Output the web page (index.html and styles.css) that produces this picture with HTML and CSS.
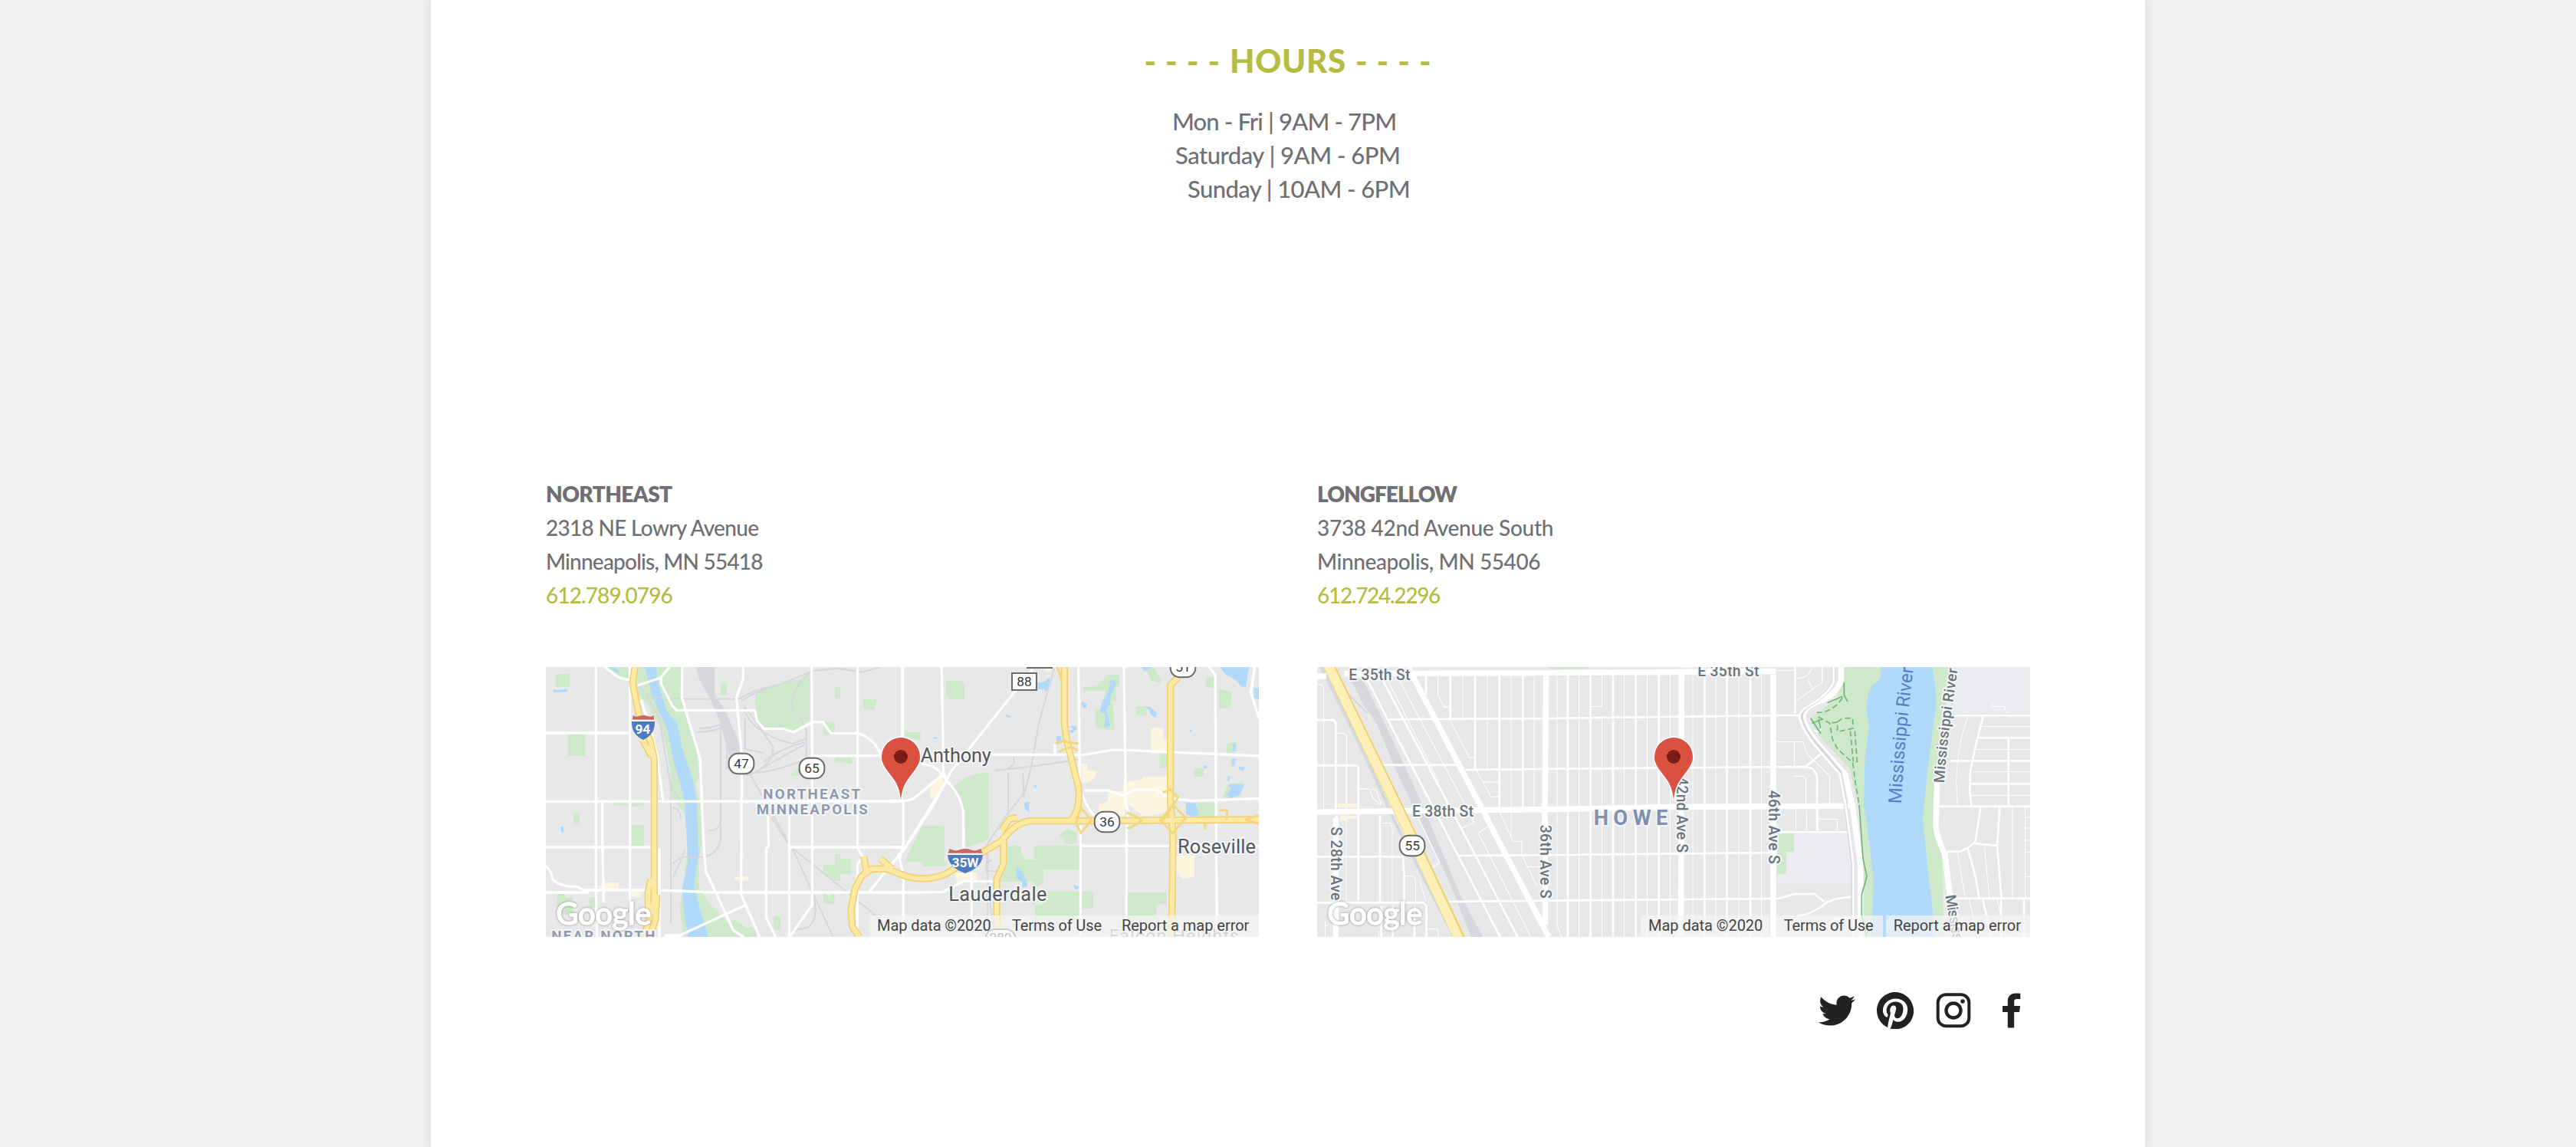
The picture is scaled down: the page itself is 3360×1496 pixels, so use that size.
FILE: index.html
```html
<!DOCTYPE html>
<html lang="en">
<head>
<meta charset="utf-8">
<title>Hours and locations</title>
<link rel="stylesheet" href="styles.css">
</head>
<body>
<main class="page">
  <section class="hours">
    <h2 class="hours-title"><span class="dashes">- - - -</span><span class="word">HOURS</span><span class="dashes">- - - -</span></h2>
    <p class="hours-line weekdays">Mon - Fri | 9AM - 7PM</p>
    <p class="hours-line saturday">Saturday | 9AM - 6PM</p>
    <p class="hours-line sunday">Sunday | 10AM - 6PM</p>
  </section>

  <section class="locations">
    <article class="location">
      <address class="address">
        <strong class="ne-name">NORTHEAST</strong>
        <span class="ne-street">2318 NE Lowry Avenue</span>
        <span class="ne-city">Minneapolis, MN 55418</span>
        <a class="ne-phone">612.789.0796</a>
      </address>
      <svg class="map" viewBox="36 30 2790 1056">
        <defs>
          <g id="pin">
            <path d="M0 171C-4 110-30 85-56 50C-70 30-75 18-75 0A75 75 0 0 1 75 0C75 18 70 30 56 50C30 85 4 110 0 171Z" fill="#db5140" stroke="#fff" stroke-width="10" paint-order="stroke"/>
            <circle r="27" fill="#7a1c18"/>
          </g>
        </defs>
        <rect class="land" x="36" y="30" width="2790" height="1056"/>
        <g class="park">
          <path d="M75 57h54v51h-54zM123 293h66v85h-66zM145 601h23v44h-23zM372 648h48v84h-48zM721 93h22v49h-22zM1167 109h21v45h-21zM1278 156h53l-10 41h-43zM1167 384h66v24l-66-6zM1122 245h44v53h-44zM987 455l40-32v32zM80 918l30 0v15h32v64h-62zM207 930h21v42h-21zM1121 918h15l6 14 10-14h13v41l-44-4zM927 1005h27v58l-27-8zM1122 803h45v-41h21v18h41v59h-41v28h-21l-45-24zM302 563h118v8l-45 4-73-6z"/>
          <path d="M275 30h125v60h-40zM400 30h178l-12 100 10 70 30 75 20 60 10 130-15 25 15 60 14 100v60l-15 60 0 120 40 65 70 70 60 110 150 50H640l-60-60-20-150 30-220-10-150-50-60-8-120-30-150-60-100-70-80z"/>
          <path d="M855 125l85-20 30-22 50-2 50-30V240l-75 45-80-12h-30l-30-35zM760 1016l20 5 40 28 40 0v37H750z"/>
        </g>
        <g class="water">
          <path d="M422 30H468L472 80 508 200 550 250 570 350 610 470 628 560 633 770 615 880 640 980 673 1086H593L573 970 570 900 592 790 580 560 565 500 536 400 512 275 455 150z"/>
          <path d="M64 118l20 2 30-4 9 6-8 6-48 2zM93 653l12 2v22l-8 2zM278 30l30 2 20 20-22-4zM933 197l12 8-6 3zM946 243l14 17-6 2z"/>
        </g>
        <g class="rail">
          <path d="M628 30H694V140L735 200L805 365V430L850 445L825 455L755 370L715 230L680 150L640 80Z" fill="#d6d7dc"/>
          <path d="M400 105Q440 155 540 155H790L860 120 960 95 1080 45 1180 35 1270 50 1340 32M430 140L480 230 505 380 525 500V1035M525 510q30 10 35 50M530 580q30 0 34 45M720 235V700Q710 770 640 773H570L530 800M720 630Q715 670 675 670M715 270Q680 285 620 285M718 255Q690 270 635 270M810 180Q900 300 925 345Q930 400 850 445M810 190Q840 290 1000 330L1055 310M800 165Q860 120 940 105M1070 50Q980 130 1005 210Q1060 250 1055 290V390Q960 430 860 445M1055 330Q960 380 850 445M830 440L1010 760 1160 1086M920 620L990 730 1300 980 1370 1040M1085 930Q1105 1020 1060 1050L1000 1060M580 740L570 773 535 850M745 430V280M890 400Q970 340 1050 325M815 230V350L885 366"/>
        </g>
        <g class="shop"><path d="M240 890l25-17h56v25l-60 14zM372 908h38l-2 24-36-4zM775 853l25-5h28v18h-52z"/></g>
        <g class="road">
          <path d="M232 30V900L236 1086M365 30V1040M257 560V700L262 950M1076 30L1078 380M1078 460V960L990 1086M1256 30V740L1278 775 1255 800V1086M808 30V75L782 150 803 380 800 920 872 1086M570 30L568 150 640 390 652 700 662 830 700 910 770 1060 810 1086M36 288H370M36 556L1430 555M36 735H450M990 735H1440M36 912H205M190 903L480 903 700 912H1440M36 808Q60 830 62 860Q90 890 160 890L195 908M265 30L320 70 365 82M395 102L485 72 520 30M487 72V95L530 180 548 200H855L862 240 890 272H965L1005 285 1080 245H1120L1152 290H1260Q1320 310 1345 370M1085 377H1345M408 160L440 250 470 370 495 556M480 740V1086M500 1080H560L815 962M905 610L908 730 898 740V1010L935 1086M988 560V1086M1430 750L1300 910M1430 30V300"/>
        </g>
        <g transform="translate(1380 0)">
          <g class="park">
            <path d="M222 84h62l10 12v60h-56l-16-14zM60 285h62v32l-35-7-27 6zM758 108l52-2 46-45h43v43h-16l5 58h-14l8 110-5 7-70-13V197h20l20-75-90 0zM966 183h40v35h-40zM1240 68h34v43h-34zM1290 115l48 12v45l-8 19h-40zM1005 32l30 2 27 40 0 18-40-10zM1058 370h31v55h-31zM1191 425h39v34h-39zM1320 330l38-10 0 40-38 10zM1305 540l20-52 60-4-10 50-35 10zM1205 560h77v56h-77zM60 790L130 650H215V790L230 800 215 810H130V792zM250 500Q300 445 388 443V705L300 738 292 600zM665 690l32-30 37 20v38l-40 5zM450 730H515V760L530 783H568V730H743V822H603V870L560 908V960H600V908H798V975H750V1020H570V870H430zM930 912H1084V958H1045V1020H930z"/>
          </g>
          <g class="water">
            <path d="M580 90l25-2 22-16 3 25-15 33-12-14-23 0zM865 80l18 0 4 18-20 40-4 40-14 20 15 58-10 12-12-6 3-48-22-10 10-40 25-40zM753 165l20 8-2 18-15-2zM998 185l20 0 30 25-5 17-20-10-5-20zM1295 30H1408L1395 108H1378L1360 85 1310 55zM1427 112h19v45l-19-5zM985 30h45l-30 18zM1160 560l40 2 10 50-25 4-23-10zM1322 490l68 0-20 40-30 13-22-10 20-30zM702 265q30-15 33 6l-20 18-12-6 18-12zM655 300h18v20h-20zM458 214l16 8-8 8-10-8zM175 303l18 4-18 6zM525 562l22-4 0 40-15-10zM495 815l20 3 12 38 12 16v20h-20v-22l-22-15zM563 490l16 6-8 8zM1343 330l14 3-5 28-8-2zM1340 388h16l-6 28h-10zM1368 420l22 2-4 14-18-4zM1228 412l20 8-16 8zM722 880l22 10-8 12-14-8zM1172 274l14 4-8 8zM1325 455l8 2-4 20h-5z"/>
          </g>
          <g class="shop"><path d="M1025 270l46-3 4 50 14 2v48h-66zM160 490l50-35 0 40-28 52-22-4zM750 408l25 0 0 25 35 6-6 25-30 20-20-2zM820 570l35-15v-40h60v-35l75-10 0-10h99v60l20 30-25 50-60 12H990l-60-50-10 50h-100zM1122 768l72-2v85l-46 10-26-35zM255 835h90l0 30-80 10zM600 30h40l-20 22z"/></g>
          <g class="rail"><path d="M645 35L585 250 555 420 530 520 450 620 385 720V1010M412 435L550 420 700 398 740 390M465 445V610M523 445L527 540M487 380V410L465 428M380 760V840M380 828H425M400 785L380 800M390 930L410 1060"/></g>
          <g class="road">
            <path d="M53 30V310M55 560V720L40 780 55 840V1086M205 30L212 440 225 475 60 740 0 815M560 40L240 440Q210 500 160 590L60 740M0 555H60L95 545 210 450M130 412Q180 405 225 475Q280 530 290 600L290 740M400 373H660L760 374 870 355H930L1446 378M740 30L745 500Q765 570 800 610M918 30L925 560 935 600 928 680V1086M764 513H855L915 532 960 510H1045L1100 545 1190 553 1446 545M750 730H1446M748 650V1086M1250 30L1275 60 1282 1086M1430 30L1415 130 1446 230M0 735H50M0 914L210 910 290 868H410M322 835V1060L350 1086M648 330V370"/>
          </g>
        </g>
        <g class="hwy-case"><use href="#hwy-ne"/></g>
        <g class="hwy-fill"><g id="hwy-ne">
          <path d="M385 30L375 90 400 215 445 320 460 390V940L435 1040 415 1086M415 315L450 380M448 860L436 910V1000M470 920L465 1020 440 1086"/>
          <path d="M1262 1086L1235 1045 1230 980 1245 900 1270 850 1310 820H1370L1450 850Q1530 870 1600 840L1820 710Q1870 640 1930 632H2150L2826 627"/>
          <path d="M2065 30V250L2075 320 2120 500Q2130 590 2090 630M2510 70L2480 100V560L2490 690 2485 1086M1827 690V800L1800 860V1000L1806 1050M1280 770L1290 830M1345 780L1390 820M1820 670L1850 625 1880 620"/>
        </g></g>
        <g class="ramp"><path d="M2030 330l30-10 60 10M2045 360q60-30 70 0M2110 640l20-60 40 50-40 50zM2310 600q30 10 60 30-40 30-60 30M2450 520l30-10 30 30-20 30-40 60M2540 620l-50-50-50 60 50 50zM2670 590h30v40M2615 640v25M2826 610l-50 17 50 17M2036 30l20 50"/></g>
        <g class="label area">
          <text x="886" y="547" textLength="380">NORTHEAST</text>
          <text x="860" y="605" textLength="435">MINNEAPOLIS</text>
          <text x="58" y="1102" textLength="405">NEAR NORTH</text>
        </g>
        <g class="label town">
          <text x="1502" y="402" textLength="276">Anthony</text>
          <text x="1612" y="944" textLength="384">Lauderdale</text>
          <text x="2508" y="759" textLength="306">Roseville</text>
          <text x="2240" y="1108" textLength="508" class="faded">Falcon Heights</text>
        </g>
        <g class="badge">
          <rect x="752" y="368" width="98" height="80" rx="36"/><text x="801" y="427">47</text>
          <rect x="1028" y="386" width="98" height="80" rx="36"/><text x="1077" y="445">65</text>
          <rect x="2183" y="596" width="98" height="80" rx="36"/><text x="2232" y="655">36</text>
          <rect x="2480" y="-10" width="98" height="80" rx="36"/><text x="2529" y="49">51</text>
          <rect x="1860" y="54" width="96" height="66"/><text x="1908" y="105">88</text>
          <rect x="1757" y="1056" width="116" height="80" rx="36"/><text x="1815" y="1106">280</text>
          <path d="M1917 33H2019"/>
        </g>
        <g class="shield">
          <path class="red" d="M377 219q10 8 20 4 11-4 20-4 9 0 20 4 10 4 20-4l4 24h-88z"/>
          <path class="white" d="M373 236h88v8h-88z"/>
          <path class="blue" d="M372 243h90q2 50-45 72q-47-22-45-72z"/>
          <text x="415" y="291">94</text>
          <path class="red" d="M1616 741q20 10 33 6 15-6 28-6 14 0 28 6 15 4 33-6l8 22h-138z"/>
          <path class="white" d="M1609 758h136v8h-136z"/>
          <path class="blue" d="M1608 765h138q-4 50-69 72q-65-22-69-72z"/>
          <text x="1677" y="813">35W</text>
        </g>
        <use href="#pin" x="1425" y="381"/>
        <text class="logo" x="76" y="1038" textLength="372">Google</text>
        <rect class="credit-bg" x="1302" y="1002" width="1524" height="84"/>
        <g class="credit">
          <text x="1332" y="1062" textLength="446">Map data ©2020</text>
          <text x="1860" y="1062" textLength="351">Terms of Use</text>
          <text x="2289" y="1062" textLength="499">Report a map error</text>
        </g>
      </svg>
    </article>

    <article class="location">
      <address class="address">
        <strong class="lf-name">LONGFELLOW</strong>
        <span class="lf-street">3738 42nd Avenue South</span>
        <span class="lf-city">Minneapolis, MN 55406</span>
        <a class="lf-phone">612.724.2296</a>
      </address>
      <svg class="map" viewBox="24 30 2790 1056">
        <rect class="land" x="24" y="30" width="2790" height="1056"/>
        <g class="campus"><path d="M2530 30H2814V210H2520zM1828 678H2110L2118 880H1824z"/></g>
        <g class="park">
          <path d="M932 30h156v7h-156zM1828 678h61v75h-30v86h-35zM2086 30H2500L2450 500 2440 650 2470 780 2475 1086H2155L2165 870 2150 620 2110 430 1980 290 1955 230 2060 150z"/>
        </g>
        <g class="water"><path d="M2230 30H2432L2448 160 2412 440 2394 620 2415 840 2445 1086H2194L2200 850 2175 640 2163 570 2168 380 2184 260 2172 190 2184 120 2230 68z"/></g>
        <g class="rail">
          <path d="M160 80L200 80 290 260 420 540 580 920 670 1086H630L540 860 400 570 330 420 260 250 210 180z" fill="#d6d7dc"/>
          <path stroke-width="12" d="M40 30L130 210 250 460 330 640 560 1086"/>
          <path d="M120 110L220 210"/>
        </g>
        <g class="blocks-case"><use href="#wide" stroke-width="15"/><use href="#thin" stroke-width="9"/><use href="#main" stroke-width="29"/></g>
        <g class="blocks-case"><use href="#wide"/><use href="#thin"/></g>
        <g class="blocks-fill">
          <g id="thin">
            <path d="M594 60V235M690 60V430M783 60V590M873 60V590M963 60V580M1049 60V1086M1138 60V185H1098M1138 230V1086M1225 60V1086M1316 60V1086M1406 60V1086M1494 60V1086M1584 60V1086M1674 60V1086M1763 60V1086M963 590V1040L980 1086M783 590V700M497 66V140L520 186H540M545 240L620 385H640M645 430L705 538H735M672 480H735M735 590L790 712H825V765M825 765L885 890M845 812H900M345 80L640 640 590 660M690 655L655 680 860 1086M300 80L500 480M24 98H40L50 110V590M100 290H130L140 300V590M138 420V590M190 507H230L240 540M280 640H310L318 660V945M365 848H400L410 860V945M425 865L450 945M138 610V770M138 780V945M455 1055H495L500 1086M55 1022V1086M265 1060V1086M500 800L465 818M415 610L505 800M235 510q20-10 30 30l10 30q-20-10-40-40M1450 30h50"/>
            <path d="M1822 322H1925L1940 370 2030 455V570M1892 322V420M1890 457H1930L1936 470V570M1985 625H2060V670M1897 590V670M1940 590V670M1985 590V670M2665 185l50 0 5 25M2665 170v15M1900 74q50 0 60-44M1945 80l20 40M1900 160Q1960 120 2000 90V30M2625 262H2814M2600 352H2814M2590 439H2814M2582 532H2814M2570 225Q2530 330 2525 480L2530 570M2530 755L2560 935M2635 735L2655 935M2745 580V935M2795 580V935M2795 618H2814M2795 660H2814M2795 708H2814M2795 755H2814M2795 850H2814M2575 940L2610 1086M2685 940L2720 1086M1822 43H1890"/>
          </g>
          <g id="wide">
            <path d="M450 60V140M545 60V235M642 60V430M737 60V590M829 60V590M1005 60V1086M1094 60V1086M1182 60V1086M1271 60V1086M1361 60V1086M1540 60V1086M1628 60V1086M1719 60V1086M300 235L916 231 1910 218M275 413H570M605 432L1020 428 1915 420 1960 425Q1985 450 1980 480V670M580 768L1020 765 1810 756M540 948L920 944 1830 936 1890 918H1970L2010 950M1820 676H2105M24 237H90L97 250V590M24 415H180L185 425V945M24 772H360L365 850V945M24 952H440L452 965V1086M270 610V945M220 80L740 1086M280 80L640 760 808 1086M1894 30V210M1935 420L1995 370M1900 1005Q1960 1000 2020 950 2060 930 2115 930M1990 1060L2060 1015 2120 1010M100 610V660M405 965V1086M320 965V1086M275 965V1086"/>
            <path d="M2520 220H2814M2610 307H2814M2500 397H2814M2575 487H2814M2460 575H2814M2490 752H2540Q2590 730 2600 710L2620 580M2590 720L2685 728M2630 225Q2600 330 2580 440L2578 520 2585 575M2729 310V575M2695 580L2685 730 2702 935M2500 935H2814M2570 740L2600 850 2615 935M2628 940L2645 1010 2660 1086M2700 935V1086M2790 935V1086"/>
          </g>
          <g id="main">
            <path d="M24 66H60M24 597L916 587 1410 578 2130 573M130 56L1410 50 1820 46M380 30L930 1086M920 60L915 590 917 1040M1450 60L1448 1086M1809 60L1809 1086M97 620V1086"/>
            <path d="M2075 30V80Q2060 130 2000 160 1930 180 1925 225 1930 270 2000 350L2090 450 2120 580 2150 800V1086M2450 480L2445 650Q2450 700 2480 760L2500 920"/>
          </g>
        </g>
        <path d="M1985 255a14 14 0 1 1-15 20" fill="none" stroke="#fff" stroke-width="6"/>
        <path d="M2045 30V90Q2020 140 1950 180 1915 200 1918 230 1930 280 1980 335L2070 440 2095 590 2120 800V1086" fill="none" stroke="#d4d5da" stroke-width="14"/>
        <path d="M2045 30V90Q2020 140 1950 180 1910 200 1912 230 1925 280 1975 340L2070 450 2095 590 2122 800V1086" fill="none" stroke="#fff" stroke-width="9"/>
        <g class="trail">
          <path d="M2086 90V140L2100 165M2080 145L2020 170M1955 230L1995 290M1960 250L2000 235M2145 570L2160 780 2175 850 2155 920V1000L2175 1086M1995 270L1985 235"/>
          <path stroke-dasharray="22 12" d="M2080 150Q2040 210 1980 208M1985 225L2030 250 2040 310 2060 350 2120 405 2130 480 2145 570M2060 245L2080 230H2120V270L2060 283V245L2030 250M2110 280L2122 400M2128 280L2137 400L2122 405"/>
        </g>
        <path d="M68 20L340 580 590 1110" fill="none" stroke="#f2cf6d" stroke-width="44"/>
        <path d="M66 20L338 580 586 1110" fill="none" stroke="#fdefb5" stroke-width="36"/>
        <path class="shop" d="M105 564h73v15h-73zM114 612h64v12h-42v6h-22z"/>
        <g class="label street">
          <text x="148" y="80" textLength="240">E 35th St</text>
          <text x="1513" y="65" textLength="240">E 35th St</text>
          <text x="396" y="615" textLength="240">E 38th St</text>
          <text transform="translate(79 655) rotate(90)" textLength="288">S 28th Ave</text>
          <text transform="translate(898 647) rotate(90)" textLength="288">36th Ave S</text>
          <text transform="translate(1432 460) rotate(90)" textLength="296">42nd Ave S</text>
          <text transform="translate(1790 512) rotate(90)" textLength="288">46th Ave S</text>
          <path id="parkway" d="M2478 484Q2486 330 2532 30" class="guide"/>
          <text><textPath href="#parkway" textLength="450">Mississippi River</textPath></text>
          <text transform="translate(2482 925) rotate(80)" textLength="390">Mississippi River</text>
        </g>
        <g class="river-name">
          <path id="river" d="M2310 565Q2322 300 2362 0" class="guide"/>
          <text><textPath href="#river" textLength="534">Mississippi River</textPath></text>
        </g>
        <text class="label howe" x="1106" y="647" textLength="290">HOWE</text>
        <g class="badge"><rect x="347" y="689" width="98" height="80" rx="36"/><text x="397" y="748">55</text></g>
        <use href="#pin" x="1419" y="381"/>
        <text class="logo" x="64" y="1038" textLength="372">Google</text>
        <path class="credit-bg" d="M1290 1002H1794V1086H1290zM1822 1002H2238V1086H1822zM2250 1002H2814V1086H2250z"/>
        <g class="credit">
          <text x="1320" y="1062" textLength="448">Map data ©2020</text>
          <text x="1850" y="1062" textLength="351">Terms of Use</text>
          <text x="2279" y="1062" textLength="499">Report a map error</text>
        </g>
      </svg>
    </article>
  </section>

  <nav class="social">
    <svg viewBox="16 16 32 32"><path d="M48,22.1c-1.2,0.5-2.4,0.9-3.8,1c1.4-0.8,2.4-2.1,2.9-3.6c-1.3,0.8-2.7,1.3-4.2,1.6C41.7,19.8,40,19,38.2,19c-3.6,0-6.6,2.9-6.6,6.6c0,0.5,0.1,1,0.2,1.5c-5.5-0.3-10.3-2.9-13.5-6.9c-0.6,1-0.9,2.1-0.9,3.3c0,2.3,1.2,4.3,2.9,5.5c-1.1,0-2.1-0.3-3-0.8c0,0,0,0.1,0,0.1c0,3.2,2.3,5.8,5.3,6.4c-0.6,0.1-1.1,0.2-1.7,0.2c-0.4,0-0.8,0-1.2-0.1c0.8,2.6,3.3,4.5,6.1,4.6c-2.2,1.8-5.1,2.8-8.2,2.8c-0.5,0-1.1,0-1.6-0.1c2.9,1.9,6.4,2.9,10.1,2.9c12.1,0,18.7-10,18.7-18.7c0-0.3,0-0.6,0-0.8C46,24.5,47.1,23.4,48,22.1z"/></svg>
    <svg viewBox="16 16 32 32"><path d="M32,16c-8.8,0-16,7.2-16,16c0,6.6,3.9,12.2,9.6,14.7c0-1.1,0-2.5,0.3-3.7c0.3-1.3,2.1-8.7,2.1-8.7s-0.5-1-0.5-2.5c0-2.4,1.4-4.1,3.1-4.1c1.5,0,2.2,1.1,2.2,2.4c0,1.5-0.9,3.7-1.4,5.7c-0.4,1.7,0.9,3.1,2.5,3.1c3,0,5.1-3.9,5.1-8.5c0-3.5-2.4-6.1-6.7-6.1c-4.9,0-7.9,3.6-7.9,7.7c0,1.4,0.4,2.4,1.1,3.1c0.3,0.3,0.3,0.5,0.2,0.9c-0.1,0.3-0.3,1-0.3,1.3c-0.1,0.4-0.4,0.6-0.8,0.4c-2.2-0.9-3.3-3.4-3.3-6.1c0-4.5,3.8-10,11.4-10c6.1,0,10.1,4.4,10.1,9.2c0,6.3-3.5,11-8.6,11c-1.7,0-3.4-0.9-3.9-2c0,0-0.9,3.7-1.1,4.4c-0.3,1.2-1,2.5-1.6,3.4c1.4,0.4,3,0.7,4.5,0.7c8.8,0,16-7.2,16-16C48,23.2,40.8,16,32,16z"/></svg>
    <svg viewBox="0 0 48 48"><rect x="3.7" y="3.2" width="40.6" height="41" rx="10.5" fill="none" stroke="#222" stroke-width="4"/><circle cx="24" cy="24" r="9.5" fill="none" stroke="#222" stroke-width="4.4"/><circle cx="36" cy="12" r="2.8"/></svg>
    <svg viewBox="16 16 32 32"><path d="M34.1,47V33.3h4.6l0.7-5.3h-5.3v-3.4c0-1.5,0.4-2.6,2.6-2.6l2.8,0v-4.8c-0.5-0.1-2.2-0.2-4.1-0.2c-4.1,0-6.9,2.5-6.9,7V28H24v5.3h4.5V47H34.1z"/></svg>
  </nav>
</main>
</body>
</html>
```

FILE: styles.css
```css
* { box-sizing: border-box; }
body { margin: 0; background: #f2f2f2; font-family: Lato, sans-serif; color: #6f6f74; overflow: hidden; }
.page { width: 2236px; height: 1496px; margin: 0 auto; padding: 52px 150px 0; background: #fff; box-shadow: 0 0 14px rgba(0, 0, 0, .13); }

.hours { height: 570px; }
.hours-title { display: flex; justify-content: center; align-items: baseline; gap: 12px; margin: 0 0 30px; font-size: 42px; line-height: 54px; font-weight: 900; color: #b5bc42; }
.dashes { letter-spacing: 1px; }
.word { letter-spacing: .7px; }
.hours-line { width: 292px; margin: 0 auto; font-size: 31px; line-height: 44px; white-space: nowrap; font-weight: 500; }
.weekdays { transform: translateX(-5px); letter-spacing: -.85px; }
.saturday { transform: translateX(-1px); letter-spacing: -.5px; }
.sunday { transform: translateX(15px); letter-spacing: -.6px; }

.locations { display: grid; grid-template-columns: 930px 930px; gap: 76px; }
.address { display: flex; flex-direction: column; align-items: flex-start; height: 248px; font-style: normal; font-size: 28px; line-height: 44px; white-space: nowrap; font-weight: 500; }
.address a { color: #b5bc42; }
.address strong { font-weight: 800; }
.ne-name { letter-spacing: -.6px; }
.ne-street { letter-spacing: -.7px; }
.ne-city { letter-spacing: -.8px; }
.ne-phone { letter-spacing: -.9px; }
.lf-name { letter-spacing: -1px; }
.lf-street { letter-spacing: -.3px; }
.lf-city { letter-spacing: -.4px; }
.lf-phone { letter-spacing: -1.3px; }

.map { display: block; width: 930px; height: 352px; font-family: Roboto, sans-serif; }
.land { fill: #e8e8e8; }
.campus { fill: #ebecf0; }
.park { fill: #cee8ca; }
.water { fill: #b1d9fb; }
.shop { fill: #fdf5df; }
.rail { fill: none; stroke: #d6d7dc; stroke-width: 6; }
.road { fill: none; stroke: #fff; stroke-width: 10; stroke-linejoin: round; }
.hwy-case, .hwy-fill { fill: none; stroke-linejoin: round; }
.hwy-case { stroke: #f1d071; stroke-width: 28; }
.hwy-fill { stroke: #fde9a4; stroke-width: 18; }
.ramp { fill: none; stroke: #f3d67f; stroke-width: 9; stroke-linejoin: round; }
.blocks-case { fill: none; stroke: #d8d9de; }
.blocks-fill { fill: none; stroke: #fff; stroke-linejoin: round; }
.blocks-fill > #thin { stroke-width: 4px; }
.blocks-fill > #wide { stroke-width: 9px; }
.blocks-fill > #main { stroke-width: 23px; }
.trail { fill: none; stroke: #6fb878; stroke-width: 5; }
.guide { fill: none; }

.label text, .howe { paint-order: stroke; stroke: #f4f5f6; stroke-width: 12px; stroke-linejoin: round; }
.area { font-size: 56px; font-weight: 700; fill: #8d99b0; }
.town { font-size: 76px; fill: #54575c; }
.town .faded { fill: #8a8c8f; font-size: 70px; }
.street { font-size: 58px; fill: #6b757b; font-weight: 500; }
.howe { font-size: 82px; font-weight: 700; fill: #8290ab; }
.river-name { font-size: 72px; fill: #5480c4; }
.badge rect, .badge path { fill: #fff; stroke: #6a6a6a; stroke-width: 6; }
.badge text { font-size: 52px; text-anchor: middle; fill: #3a3a3a; }
.shield .red { fill: #cb6763; }
.shield .white { fill: #fff; }
.shield .blue { fill: #4a7bc3; }
.shield text { font-size: 52px; font-weight: 700; text-anchor: middle; fill: #fff; }
.logo { font-family: Lato, sans-serif; font-size: 120px; font-weight: 500; fill: #fff; stroke: #fff; stroke-width: 4px; filter: drop-shadow(0 0 5px rgba(0, 0, 0, .4)); }
.credit-bg { fill: #f5f5f5; fill-opacity: .7; }
.credit { font-size: 60px; fill: #444; }

.social { display: flex; justify-content: flex-end; gap: 28px; padding-top: 72px; }
.social svg { width: 48px; height: 48px; fill: #222; }
```
